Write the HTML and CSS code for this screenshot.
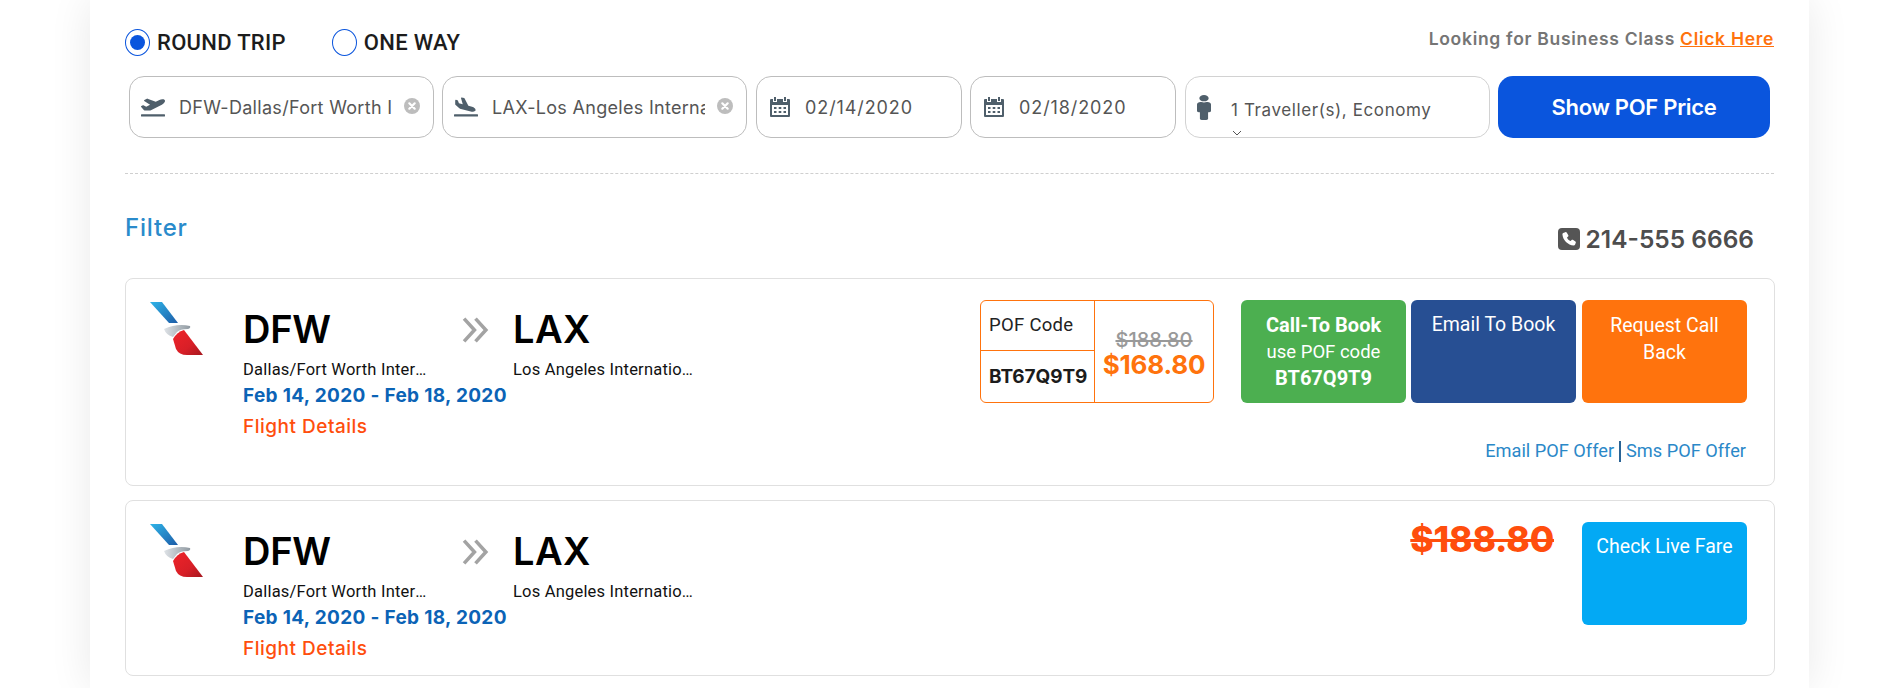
FILE: index.html
```html
<!DOCTYPE html>
<html lang="en">
<head>
<meta charset="utf-8">
<title>POF Fares</title>
<link rel="stylesheet" href="styles.css">
</head>
<body>
<svg class="defs" width="0" height="0" aria-hidden="true">
  <defs>
    <linearGradient id="tailBlue" x1="0" y1="0" x2="1" y2="1"><stop offset="0" stop-color="#2fb4e8"/><stop offset="1" stop-color="#1d5da8"/></linearGradient>
    <linearGradient id="tailRed" x1="0" y1="0" x2="1" y2="1"><stop offset="0" stop-color="#ee2329"/><stop offset=".6" stop-color="#d81f27"/><stop offset="1" stop-color="#a5181f"/></linearGradient>
    <linearGradient id="tailGrey" x1="0" y1="0" x2="1" y2="0"><stop offset="0" stop-color="#dfe3e7"/><stop offset="1" stop-color="#8f99a1"/></linearGradient>
    <symbol id="tail" viewBox="0 0 54 54">
      <path d="M1 0H13L29 21H20Z" fill="url(#tailBlue)"/>
      <path d="M15 27Q28 21 41 24Q42 26 39 27Q31 27 28 30L24 35Q17 33 15 27Z" fill="url(#tailGrey)"/>
      <path d="M24 37Q28 30 35 28L54 53H38Q30 53 27 47Z" fill="url(#tailRed)"/>
    </symbol>
    <symbol id="cal" viewBox="0 0 20 20">
      <path d="M4 0h2v4H4zM14 0h2v4h-2z"/>
      <path fill-rule="evenodd" d="M1 2h2v3h4V2h6v3h4V2h2a1 1 0 0 1 1 1v16a1 1 0 0 1-1 1H1a1 1 0 0 1-1-1V3a1 1 0 0 1 1-1zM2 8v10h16V8z"/>
      <rect x="4" y="10" width="2.500" height="2"/><rect x="8.700" y="10" width="2.600" height="2"/><rect x="13.500" y="10" width="2.500" height="2"/>
      <rect x="4" y="14" width="2.500" height="2"/><rect x="8.700" y="14" width="2.600" height="2"/><rect x="13.500" y="14" width="2.500" height="2"/>
    </symbol>
    <symbol id="clear" viewBox="0 0 16 16">
      <circle cx="8" cy="8" r="8" fill="#bdbdbd"/>
      <path d="M5.300 5.300l5.400 5.400M10.700 5.300l-5.400 5.400" stroke="#fff" stroke-width="2.200" stroke-linecap="round"/>
    </symbol>
    <symbol id="chev" viewBox="0 0 26 24">
      <path d="M2 1l10 11-10 11M13 1l10 11-10 11" fill="none" stroke="#a3a3a3" stroke-width="3.400"/>
    </symbol>
  </defs>
</svg>
<main class="sheet">
  <div class="trip-row">
    <div class="trip-options">
      <span class="trip-option"><span class="radio radio-on"></span>ROUND TRIP</span>
      <span class="trip-option"><span class="radio"></span>ONE WAY</span>
    </div>
    <p class="business">Looking for Business Class <a href="#">Click Here</a></p>
  </div>
  <form class="search">
    <div class="field field-place">
      <svg class="ico ico-plane" viewBox="0 0 640 512"><path d="M624 448H16c-8.840 0-16 7.160-16 16v32c0 8.840 7.160 16 16 16h608c8.840 0 16-7.160 16-16v-32c0-8.840-7.160-16-16-16zM80.550 341.270c6.280 6.840 15.100 10.720 24.330 10.710l130.540-.18a65.620 65.620 0 0 0 29.640-7.120l290.960-147.650c26.740-13.570 50.710-32.940 67.020-58.310 18.310-28.480 20.300-49.090 13.070-63.650-7.210-14.570-24.740-25.270-58.250-27.450-29.850-1.940-59.540 5.920-86.280 19.480l-98.510 49.990-218.700-82.060a17.799 17.799 0 0 0-18-1.110L90.620 67.290c-10.670 5.410-13.250 19.650-5.170 28.530l156.220 98.100-103.210 52.380-72.350-36.470a17.804 17.804 0 0 0-16.070.02L9.910 230.220c-10.440 5.300-13.190 19.120-5.570 28.080l76.210 82.970z"/></svg>
      <span class="field-text">DFW-Dallas/Fort Worth International</span>
      <svg class="ico-clear"><use href="#clear"/></svg>
    </div>
    <div class="field field-place">
      <svg class="ico ico-plane" viewBox="0 0 640 512"><path d="M624 448H16c-8.840 0-16 7.160-16 16v32c0 8.840 7.160 16 16 16h608c8.840 0 16-7.160 16-16v-32c0-8.840-7.160-16-16-16zM44.810 205.660l88.740 80a62.607 62.607 0 0 0 25.470 13.930l287.600 78.350c26.490 7.220 54.560 8.720 81 1.360 29.670-8.270 43.440-21.210 47.250-35.710 3.830-14.500-1.730-32.710-23.370-54.960-19.280-19.820-44.350-32.790-70.830-40l-97.510-26.560L282.800 30.220c-1.510-5.810-5.950-10.350-11.660-11.910L206.050.58c-10.560-2.880-20.900 5.320-20.710 16.440l47.920 164.210-102.200-27.840-27.590-67.880c-1.930-4.890-6.010-8.570-11.020-9.930L52.720 64.750c-10.340-2.820-20.530 5-20.720 15.880l.23 101.780c.19 8.910 6.030 17.340 12.580 23.250z"/></svg>
      <span class="field-text">LAX-Los Angeles International</span>
      <svg class="ico-clear"><use href="#clear"/></svg>
    </div>
    <div class="field field-date">
      <svg class="ico ico-cal"><use href="#cal"/></svg>
      <span class="field-date-text">02/14/2020</span>
    </div>
    <div class="field field-date">
      <svg class="ico ico-cal"><use href="#cal"/></svg>
      <span class="field-date-text">02/18/2020</span>
    </div>
    <div class="field field-travel">
      <svg class="ico ico-man" viewBox="0 0 192 512" preserveAspectRatio="none"><path d="M96 0c35.346 0 64 28.654 64 64s-28.654 64-64 64-64-28.654-64-64S60.654 0 96 0m48 144h-11.360c-22.711 10.443-49.590 10.894-73.280 0H48c-26.510 0-48 21.490-48 48v136c0 13.255 10.745 24 24 24h16v136c0 13.255 10.745 24 24 24h64c13.255 0 24-10.745 24-24V352h16c13.255 0 24-10.745 24-24V192c0-26.510-21.490-48-48-48z"/></svg>
      <span class="travel-stack">
        <span class="travel-text">1 Traveller(s), Economy</span>
        <svg class="travel-caret" viewBox="0 0 10 6"><path d="M1 1l4 4 4-4" fill="none" stroke="#555" stroke-width="1"/></svg>
      </span>
    </div>
    <button class="show-btn" type="button">Show POF Price</button>
  </form>
  <hr class="rule">
  <div class="filter-row">
    <h2 class="filter">Filter</h2>
    <div class="phone">
      <svg class="phone-ico" viewBox="0 0 22 22"><rect width="22" height="22" rx="4" fill="#555"/><path d="M7.300 4.200L5.200 5c-.5.200-.8.700-.8 1.300C4.700 12 10 17.300 15.700 17.600c.6 0 1.100-.3 1.300-.8l.8-2.100c.2-.5 0-1-.4-1.300l-2.500-1.600c-.4-.3-1-.2-1.300.2l-.9 1.100C10.900 12.400 9.600 11.100 9 9.500l1.100-.9c.4-.3.500-.9.200-1.300L8.700 4.600c-.3-.4-.9-.6-1.400-.4z" fill="#fff"/></svg>
      <span>214-555 6666</span>
    </div>
  </div>

  <article class="fare fare-pof">
    <svg class="tail"><use href="#tail"/></svg>
    <div class="flight">
      <div class="route">
        <span class="code">DFW</span>
        <svg class="chev"><use href="#chev"/></svg>
        <span class="code">LAX</span>
      </div>
      <div class="airports">
        <span class="airport">Dallas/Fort Worth International</span>
        <span class="airport">Los Angeles International Airport</span>
      </div>
      <div class="dates">Feb 14, 2020 - Feb 18, 2020</div>
      <a class="details" href="#">Flight Details</a>
    </div>
    <div class="fare-side">
      <div class="offer">
        <div class="pof-box">
          <div class="pof-code">
            <div class="pof-label">POF Code</div>
            <div class="pof-value">BT67Q9T9</div>
          </div>
          <div class="pof-price">
            <s class="was">$188.80</s>
            <strong class="now">$168.80</strong>
          </div>
        </div>
        <div class="actions">
          <a class="act act-green" href="#"><b>Call-To Book</b><br>use POF code<br><b>BT67Q9T9</b></a>
          <a class="act act-blue" href="#">Email To Book</a>
          <a class="act act-orange" href="#">Request Call Back</a>
        </div>
      </div>
      <p class="offer-links"><a href="#">Email POF Offer</a><span class="sep"></span><a href="#">Sms POF Offer</a></p>
    </div>
  </article>

  <article class="fare fare-live">
    <svg class="tail"><use href="#tail"/></svg>
    <div class="flight">
      <div class="route">
        <span class="code">DFW</span>
        <svg class="chev"><use href="#chev"/></svg>
        <span class="code">LAX</span>
      </div>
      <div class="airports">
        <span class="airport">Dallas/Fort Worth International</span>
        <span class="airport">Los Angeles International Airport</span>
      </div>
      <div class="dates">Feb 14, 2020 - Feb 18, 2020</div>
      <a class="details" href="#">Flight Details</a>
    </div>
    <div class="live-side">
      <s class="live-price">$188.80</s>
      <a class="act act-live" href="#">Check Live Fare</a>
    </div>
  </article>
</main>
</body>
</html>
```
FILE: styles.css
```css
* { box-sizing: border-box; }
html, body { margin: 0; height: 688px; overflow: hidden; background: #fff; }
body { font-family: "Inter", "Roboto", sans-serif; color: #222; }
a { text-decoration: none; }
.defs { position: absolute; }

.sheet {
  width: 1719px;
  height: 688px;
  margin-left: 90px;
  padding: 28px 35px 0;
  background: #fff;
  box-shadow: 0 0 40px rgba(0, 0, 0, .09);
}

.trip-row { display: flex; justify-content: space-between; align-items: flex-start; height: 48px; }
.trip-options { display: flex; gap: 46px; }
.trip-option { display: flex; align-items: center; gap: 7px; height: 28px; font-family: "Roboto", sans-serif; font-size: 22px; font-weight: 500; letter-spacing: .3px; color: #1c1c1c; }
.radio { display: flex; align-items: center; justify-content: center; width: 25px; height: 27px; border: 1px solid #0a55dd; border-radius: 50%; }
.radio-on::after { content: ""; width: 15px; height: 15px; border-radius: 50%; background: #0a55dd; }
.business { margin: 1px 0 0; font-size: 17.500px; font-weight: 600; letter-spacing: .7px; color: #757575; line-height: 20px; white-space: nowrap; }
.business a { color: #ff730d; text-decoration: underline; }

.search { display: flex; height: 62px; padding-left: 4px; }
.field { flex: none; display: flex; align-items: center; height: 62px; margin-right: 8px; background: #fff; border: 1px solid #bdbdbd; border-radius: 15px; color: #555; font-size: 18px; }
.field-place { width: 305px; padding-left: 11px; }
.field-date { width: 206px; padding-left: 13px; }
.field-place + .field-date { margin-left: 1px; }
.field-date + .field-travel { margin-left: 1px; }
.field-travel { width: 305px; padding-left: 11px; border-color: #d2d2d2; font-size: 17px; }
.ico { flex: none; fill: #4f5f6b; }
.ico-plane { width: 24px; height: 20px; margin-right: 14px; }
.ico-cal { width: 20px; height: 20px; margin-right: 15px; }
.ico-man { width: 14px; height: 25px; margin: 0 20px 0 0; }
.field-text { width: 213px; overflow: hidden; white-space: nowrap; letter-spacing: .3px; }
.field-date-text { letter-spacing: .9px; }
.ico-clear { flex: none; width: 16px; height: 16px; margin: -3px 0 0 12px; }
.travel-stack { display: flex; flex-direction: column; padding-top: 21px; }
.travel-text { letter-spacing: .6px; line-height: 20px; }
.travel-caret { width: 10px; height: 6px; margin: 10px 0 0 1px; }
.show-btn { flex: none; width: 272px; height: 62px; border: 0; border-radius: 15px; background: #0a55dd; color: #fff; font: 600 22px "Inter", sans-serif; letter-spacing: -.3px; }

.rule { height: 0; margin: 35px 0 0; border: 0; border-top: 1px dashed #cfcfcf; }

.filter-row { display: flex; justify-content: space-between; height: 104px; padding-right: 20px; }
.filter { margin: 41px 0 0; font-size: 24px; font-weight: 500; letter-spacing: .8px; line-height: 26px; color: #2a8bcb; }
.phone { display: flex; align-items: center; gap: 6px; height: 24px; margin-top: 53px; font-size: 24.500px; font-weight: 600; color: #4d4d4d; }
.phone-ico { width: 22px; height: 22px; }

.fare { display: flex; width: 1650px; background: #fff; border: 1px solid #e0e0e0; border-radius: 8px; }
.fare-pof { height: 208px; padding: 23px 0 0 23px; margin-bottom: 14px; }
.fare-live { height: 176px; padding: 23px 0 0 23px; }
.tail { flex: none; width: 54px; height: 54px; }

.flight { flex: none; width: 500px; margin-left: 40px; padding-top: 5px; }
.route { display: flex; align-items: center; height: 44px; }
.code { flex: none; font-size: 38px; font-weight: 600; line-height: 44px; color: #000; letter-spacing: -.3px; }
.route .code:first-child { width: 219px; }
.chev { flex: none; width: 27px; height: 26px; margin: 2px 24px 0 0; }
.route .code:last-child { letter-spacing: .4px; }
.airports { display: flex; gap: 84px; height: 24px; margin-top: 7px; }
.airport { flex: none; width: 186px; overflow: hidden; text-overflow: ellipsis; white-space: nowrap; font-family: "Roboto", sans-serif; font-size: 16.500px; letter-spacing: .2px; line-height: 24px; color: #111; }
.dates { font-size: 19px; font-weight: 700; letter-spacing: .33px; line-height: 26px; color: #0b63b6; white-space: nowrap; margin-top: 1px; }
.details { display: block; margin-top: 6px; font-size: 19px; font-weight: 500; letter-spacing: .5px; line-height: 24px; color: #ff4e0d; }

.fare-side { flex: 1; display: flex; flex-direction: column; align-items: flex-end; margin-top: -2px; padding-right: 27px; }
.offer { display: flex; gap: 27px; }
.pof-box { display: flex; width: 234px; height: 103px; border: 1px solid #ff730d; border-radius: 6px; }
.pof-code { width: 114px; border-right: 1px solid #ff730d; }
.pof-label { height: 50px; padding-left: 8px; border-bottom: 1px solid #ff730d; font-family: "Roboto", sans-serif; font-size: 18.500px; line-height: 49px; color: #222; letter-spacing: .3px; }
.pof-value { padding-left: 8px; font-size: 19px; font-weight: 700; line-height: 52px; color: #1c1c1c; letter-spacing: -.1px; white-space: nowrap; }
.pof-price { flex: 1; display: flex; flex-direction: column; align-items: center; padding-top: 28px; }
.was { font-size: 20px; font-weight: 500; line-height: 22px; color: #999; }
.now { font-size: 26px; font-weight: 700; line-height: 27px; color: #ff730d; letter-spacing: -.2px; }

.actions { display: flex; gap: 5px; }
.act { display: block; width: 165px; height: 103px; padding: 12px 10px; border-radius: 6px; color: #fff; font-family: "Roboto", sans-serif; font-size: 19.500px; line-height: 26px; text-align: center; }
.act b { font-size: 20px; font-weight: 700; }
.act-green { background: #4caf50; font-size: 18.500px; }
.act-blue { background: #274f93; margin-right: 1px; }
.act-orange { background: #ff730d; padding: 12px 20px; line-height: 27px; }
.act-live { background: #03a9f4; flex: none; }

.offer-links { display: flex; align-items: center; margin: 36px 1px 0 0; font-family: "Roboto", sans-serif; font-size: 18.200px; line-height: 24px; white-space: nowrap; }
.offer-links a { color: #2a88c8; }
.sep { width: 2px; height: 21px; margin: 0 5px; background: #2a6496; }

.live-side { flex: 1; display: flex; justify-content: flex-end; align-items: flex-start; gap: 28px; margin-top: -2px; padding-right: 27px; }
.live-price { font-size: 35.500px; font-weight: 800; line-height: 36px; color: #ff4e0d; letter-spacing: -.2px; }
```
